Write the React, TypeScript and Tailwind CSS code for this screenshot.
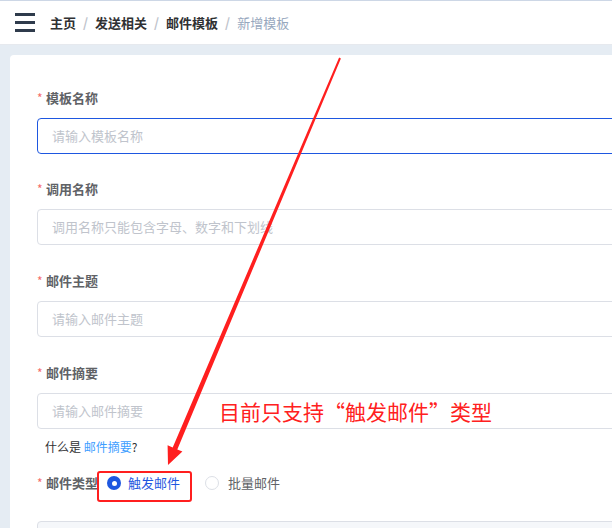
import React from 'react';

const font = { fontFamily: '"Noto Sans CJK SC", "Noto Sans", sans-serif' };

const Label = ({ text }: { text: string }) => (
  <div className="flex items-center h-5 mb-[10px] text-[13px] leading-5">
    <span className="text-[#f56c6c] w-[9px] text-[12px]">*</span>
    <span className="font-bold text-[#606266]">{text}</span>
  </div>
);

const Field = ({
  label,
  placeholder,
  focused,
  className,
}: {
  label: string;
  placeholder: string;
  focused?: boolean;
  className?: string;
}) => (
  <div className={className}>
    <Label text={label} />
    <div
      className={
        'h-9 w-[640px] rounded-[4px] border flex items-center pl-[14px] text-[13px] text-[#c0c4cc] bg-white ' +
        (focused ? 'border-[#1e57e0]' : 'border-[#dcdfe6]')
      }
    >
      {placeholder}
    </div>
  </div>
);

const Breadcrumb = () => {
  const items = ['主页', '发送相关', '邮件模板'];
  return (
    <div className="flex items-center text-[13px]">
      {items.map((it) => (
        <React.Fragment key={it}>
          <span className="font-bold text-[#303133]">{it}</span>
          <span className="mx-[7px] text-[#c0c4cc] font-bold">/</span>
        </React.Fragment>
      ))}
      <span className="text-[#97a8be]">新增模板</span>
    </div>
  );
};

export default function App() {
  return (
    <div className="relative w-[612px] h-[528px] overflow-hidden bg-[#e5ecf3]" style={font}>
      {/* top header */}
      <div className="h-[45px] bg-white border-t border-[#cdd7e6] border-b border-b-[#e6e9ee] flex items-center">
        <div className="ml-[15px] w-5 flex flex-col gap-[5px]">
          <div className="h-[3px] bg-[#2f3b4c]" />
          <div className="h-[3px] bg-[#2f3b4c]" />
          <div className="h-[3px] bg-[#2f3b4c]" />
        </div>
        <div className="ml-[15px]">
          <Breadcrumb />
        </div>
      </div>

      {/* form card */}
      <div className="ml-[10px] mt-[10px] w-[700px] bg-white rounded-tl-[4px] pt-[33px] pl-[27px] h-[500px]">
        <Field label="模板名称" placeholder="请输入模板名称" focused />
        <Field label="调用名称" placeholder="调用名称只能包含字母、数字和下划线" className="mt-[25px]" />
        <Field label="邮件主题" placeholder="请输入邮件主题" className="mt-[26px]" />
        <Field label="邮件摘要" placeholder="请输入邮件摘要" className="mt-[26px]" />

        <div className="mt-[9px] ml-[8px] h-[18px] leading-[18px] text-[12px] text-[#303133]">
          什么是 <span className="text-[#409eff]">邮件摘要</span>?
        </div>

        <div className="mt-[17px] h-5 flex items-center text-[13px]">
          <span className="text-[#f56c6c] w-[9px] text-[12px]">*</span>
          <span className="font-bold text-[#606266]">邮件类型</span>
          <div className="ml-[9px] flex items-center">
            <span className="w-[14px] h-[14px] rounded-full bg-[#1e57e0] flex items-center justify-center">
              <span className="w-[5px] h-[5px] rounded-full bg-white" />
            </span>
            <span className="ml-[7px] text-[#1e57e0]">触发邮件</span>
          </div>
          <div className="ml-[25px] flex items-center">
            <span className="w-[14px] h-[14px] rounded-full border border-[#dcdfe6] bg-white" />
            <span className="ml-[9px] text-[#606266]">批量邮件</span>
          </div>
        </div>

        <div className="mt-[28px] h-9 w-[640px] rounded-[4px] border border-[#dcdfe6] bg-[#f5f7fa]" />
      </div>

      {/* annotations */}
      <svg className="absolute left-0 top-0" width="612" height="528" viewBox="0 0 612 528">
        <polygon
          points="340.9,58.4 177.3,449.4 182.4,451.5 168,465 167.6,445.3 172.7,447.4 339.1,57.6"
          fill="#ff1f1f"
        />
      </svg>
      <div className="absolute left-[97px] top-[471px] w-[95px] h-[31px] border-2 border-[#ff1f1f] rounded-[3px]" />
      <div className="absolute left-[219px] top-[397px] text-[21px] leading-7 text-[#ff2020]">
        目前只支持“触发邮件”类型
      </div>
    </div>
  );
}
